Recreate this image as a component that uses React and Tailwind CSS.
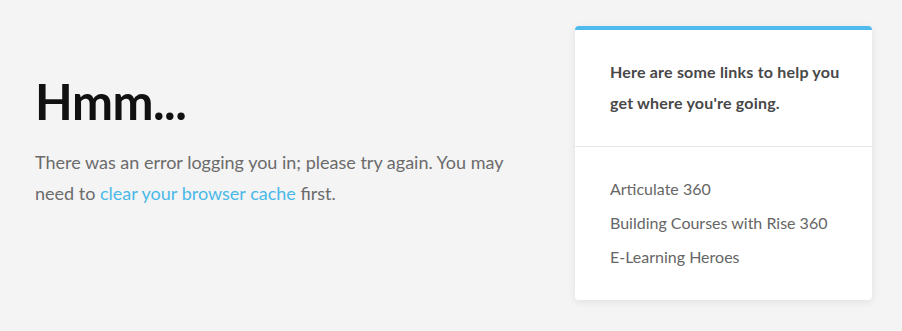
export default function App() {
  return (
    <div
      className="w-[902px] h-[331px] bg-[#f4f4f4] flex items-start justify-between pl-[35px] pr-[30px] pt-[26px]"
      style={{ fontFamily: "Lato, 'Open Sans', sans-serif" }}
    >
      <div className="w-[490px] pt-[45px]">
        <h1 className="text-[49px] leading-[60px] font-bold text-[#111] tracking-[-0.5px]">Hmm...</h1>
        <p className="mt-[16px] text-[18px] leading-[31px] text-[#6b6b6b]">
          There was an error logging you in; please try again. You may need to{" "}
          <a href="#" className="text-[#4ab9e9]">clear your browser cache</a> first.
        </p>
      </div>
      <div className="w-[297px] bg-white rounded-[4px] border-t-4 border-[#4fbaee] shadow-[0_2px_8px_rgba(0,0,0,0.08)]">
        <div className="pl-[35px] pr-[28px] pt-[26px] pb-[28px] border-b border-[#e8e8e8]">
          <p className="text-[16px] leading-[31px] font-bold text-[#484848] tracking-[0.2px]">
            Here are some links to help you get where you're going.
          </p>
        </div>
        <ul className="px-[35px] pt-[31px] pb-[33px] flex flex-col gap-[13px] text-[16px] leading-[21px] text-[#666]">
          <li><a href="#">Articulate 360</a></li>
          <li><a href="#">Building Courses with Rise 360</a></li>
          <li><a href="#">E-Learning Heroes</a></li>
        </ul>
      </div>
    </div>
  );
}
